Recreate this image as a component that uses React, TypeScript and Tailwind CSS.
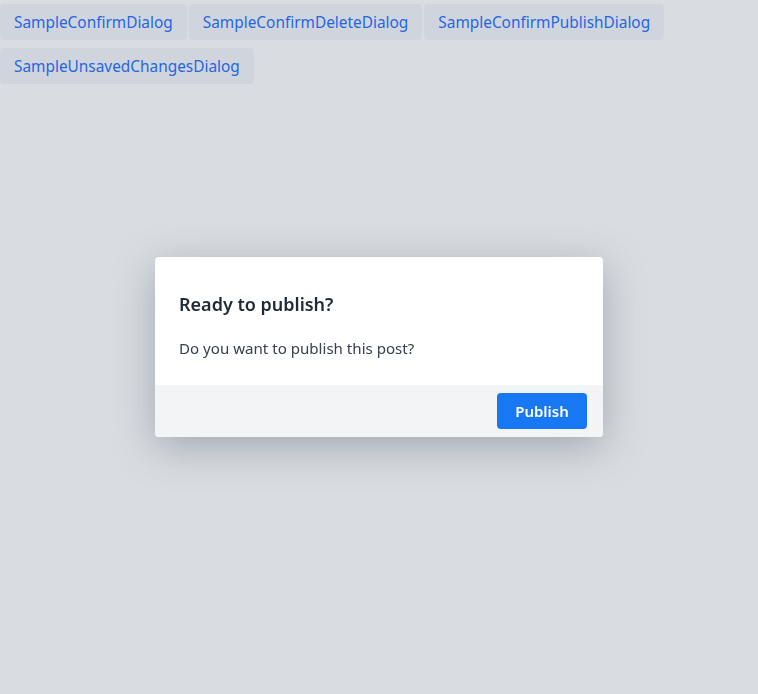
import React from "react";

const buttons = [
  "SampleConfirmDialog",
  "SampleConfirmDeleteDialog",
  "SampleConfirmPublishDialog",
  "SampleUnsavedChangesDialog",
];

export default function App() {
  return (
    <div
      className="min-h-[694px] w-full bg-[#d9dde1]"
      style={{ fontFamily: '"Noto Sans", "Open Sans", sans-serif' }}
    >
      <div className="flex flex-wrap gap-x-[2px] gap-y-[8px] pt-[4px]">
        {buttons.map((b) => (
          <button
            key={b}
            className="h-[36px] rounded-[4px] bg-[#d0d5dd] px-[14px] pt-[2px] text-[15.4px] leading-[34px] text-[#2466e0]"
          >
            {b}
          </button>
        ))}
      </div>

      <div className="fixed inset-0 flex items-center justify-center">
        <div className="w-[448px] overflow-hidden rounded-[4px] bg-white shadow-[0_10px_40px_rgba(60,70,90,0.35)]">
          <div className="px-[24px] pt-[34px] pb-[26px]">
            <h2 className="text-[18px] font-semibold leading-[26px] text-[#1f2937]">
              Ready to publish?
            </h2>
            <p className="mt-[20px] text-[15.1px] leading-[22px] text-[#374151]">
              Do you want to publish this post?
            </p>
          </div>
          <div className="flex justify-end bg-[#f3f4f6] px-[16px] py-[8px]">
            <button className="h-[36px] w-[90px] rounded-[4px] bg-[#1877f2] text-[15px] font-semibold text-white">
              Publish
            </button>
          </div>
        </div>
      </div>
    </div>
  );
}
